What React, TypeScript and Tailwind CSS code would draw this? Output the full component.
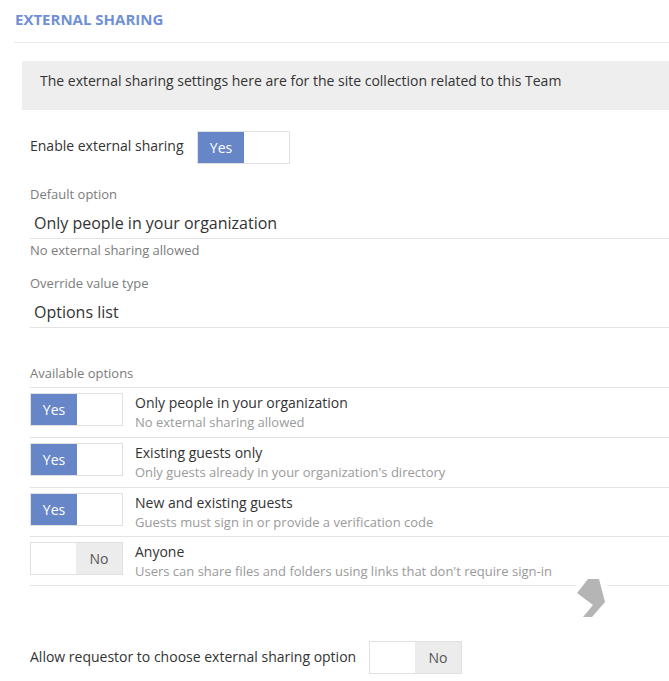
import type { ReactNode } from "react";

type ToggleProps = { on: boolean };

function Toggle({ on }: ToggleProps) {
  return (
    <div className="flex h-[33px] w-[93px] shrink-0 border border-[#e1e1e1] bg-white text-[14px]">
      {on ? (
        <>
          <div className="flex w-[46px] items-center justify-center bg-[#6686c8] text-white">Yes</div>
          <div className="flex-1" />
        </>
      ) : (
        <>
          <div className="flex-1" />
          <div className="flex w-[46px] items-center justify-center bg-[#ececec] text-[#555]">No</div>
        </>
      )}
    </div>
  );
}

function FieldLabel({ children }: { children: ReactNode }) {
  return <div className="h-[18px] text-[13px] leading-[18px] text-[#7b7b7b]">{children}</div>;
}

function FieldValue({ children }: { children: ReactNode }) {
  return (
    <div className="h-[36px] border-b border-[#e3e3e3] pl-[4px] pt-[8px] text-[16px] leading-[24px] text-[#333]">
      {children}
    </div>
  );
}

const sharingOptions = [
  { title: "Only people in your organization", hint: "No external sharing allowed", on: true, h: "h-[50px]" },
  { title: "Existing guests only", hint: "Only guests already in your organization's directory", on: true, h: "h-[50px]" },
  { title: "New and existing guests", hint: "Guests must sign in or provide a verification code", on: true, h: "h-[49px]" },
  { title: "Anyone", hint: "Users can share files and folders using links that don't require sign-in", on: false, h: "h-[49px]" },
];

// floating scroll handle that sits over the option list
function ScrollHandle() {
  return (
    <svg className="absolute left-[576px] top-[578px]" width="31" height="40" viewBox="0 0 31 40">
      <rect x="0" y="6" width="31" height="3" fill="#fff" />
      <polygon points="12,1 23,1 29,24 16,39 7,39 17,27 1,15" fill="#b5b5b5" />
    </svg>
  );
}

export default function App() {
  return (
    <div
      className="relative h-[681px] w-[669px] overflow-hidden bg-white text-[#333]"
      style={{ fontFamily: '"Open Sans", "Noto Sans", sans-serif' }}
    >
      <div className="h-[42px] pl-[15px] pt-[8px] text-[15px] font-bold leading-[22px] text-[#7090d6]">
        EXTERNAL SHARING
      </div>
      <div className="ml-[14px] h-px bg-[#ececec]" />

      <div className="ml-[22px] mt-[18px] h-[49px] bg-[#eeeeee] pl-[18px] pt-[10px] text-[14px] leading-[20px] text-[#333]">
        The external sharing settings here are for the site collection related to this Team
      </div>

      <div className="pl-[30px]">
        <div className="mt-[21px] flex items-center">
          <div className="w-[167px] pb-[4px] text-[14px] text-[#333]">Enable external sharing</div>
          <Toggle on />
        </div>

        <div className="mt-[21px]">
          <FieldLabel>Default option</FieldLabel>
          <FieldValue>Only people in your organization</FieldValue>
          <div className="mt-[2px] text-[13px] leading-[18px] text-[#7b7b7b]">No external sharing allowed</div>
        </div>

        <div className="mt-[15px]">
          <FieldLabel>Override value type</FieldLabel>
          <FieldValue>Options list</FieldValue>
        </div>

        <div className="mt-[36px]">
          <FieldLabel>Available options</FieldLabel>
          <div className="mt-[5px] border-t border-[#e3e3e3]">
            {sharingOptions.map((opt) => (
              <div key={opt.title} className={`${opt.h} flex border-b border-[#e3e3e3] pt-[5px]`}>
                <Toggle on={opt.on} />
                <div className="ml-[12px]">
                  <div className="text-[14px] leading-[20px] text-[#333]">{opt.title}</div>
                  <div className="text-[13px] leading-[18px] text-[#9a9a9a]">{opt.hint}</div>
                </div>
              </div>
            ))}
          </div>
        </div>

        <div className="mt-[55px] flex items-center">
          <div className="w-[339px] pb-[2px] text-[14px] text-[#333]">Allow requestor to choose external sharing option</div>
          <Toggle on={false} />
        </div>
      </div>

      <ScrollHandle />
    </div>
  );
}
